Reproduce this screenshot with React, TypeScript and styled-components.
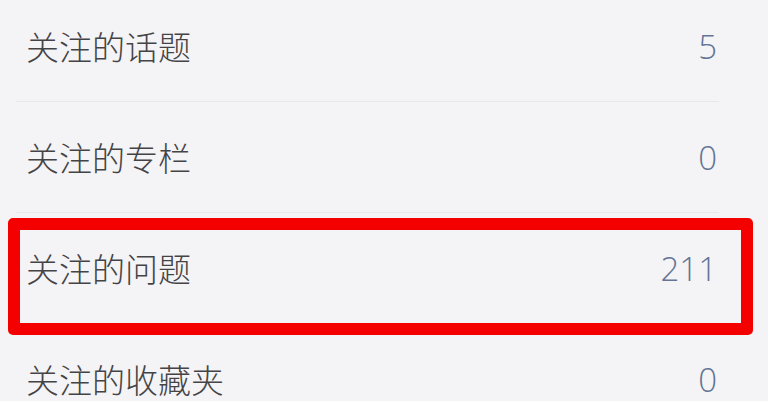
import styled, { createGlobalStyle } from "styled-components";

const GlobalStyle = createGlobalStyle`
    html, body {
        margin: 0;
        padding: 0;
        background: #f4f3f6;
        overflow: hidden;
    }
    body {
        font-family: "Noto Sans CJK SC", "Noto Sans", sans-serif;
    }
`;

const Page = styled.div`
    width: 768px;
    height: 401px;
    overflow: hidden;
    background: #f4f3f6;
`;

const List = styled.ul`
    list-style: none;
    margin: -9px 0 0 0;
    padding: 0;
`;

const Row = styled.li`
    position: relative;
    display: flex;
    align-items: center;
    justify-content: space-between;
    height: 110px;
    margin: 0 49px 0 16px;
    padding: 0 2px 0 10px;
    border-bottom: 1px solid #e8e7eb;
`;

const Label = styled.span`
    font-size: 33px;
    font-weight: 300;
    color: #444446;
`;

const Count = styled.span`
    font-family: "Open Sans", "Noto Sans", sans-serif;
    font-size: 33px;
    font-weight: 300;
    color: #637495;
`;

// red annotation drawn over the highlighted row
const Highlight = styled.div`
    position: absolute;
    top: 5px;
    bottom: -12px;
    left: -8px;
    right: -34px;
    border: 12px solid #f50000;
    border-radius: 5px;
    pointer-events: none;
`;

const items = [
    { label: "关注的话题", count: 5 },
    { label: "关注的专栏", count: 0 },
    { label: "关注的问题", count: 211, active: true },
    { label: "关注的收藏夹", count: 0 },
];

export default function App() {
    return (
        <Page>
            <GlobalStyle />
            <List>
                {items.map((item) => (
                    <Row key={item.label}>
                        <Label>{item.label}</Label>
                        <Count>{item.count}</Count>
                        {item.active && <Highlight />}
                    </Row>
                ))}
            </List>
        </Page>
    );
}
